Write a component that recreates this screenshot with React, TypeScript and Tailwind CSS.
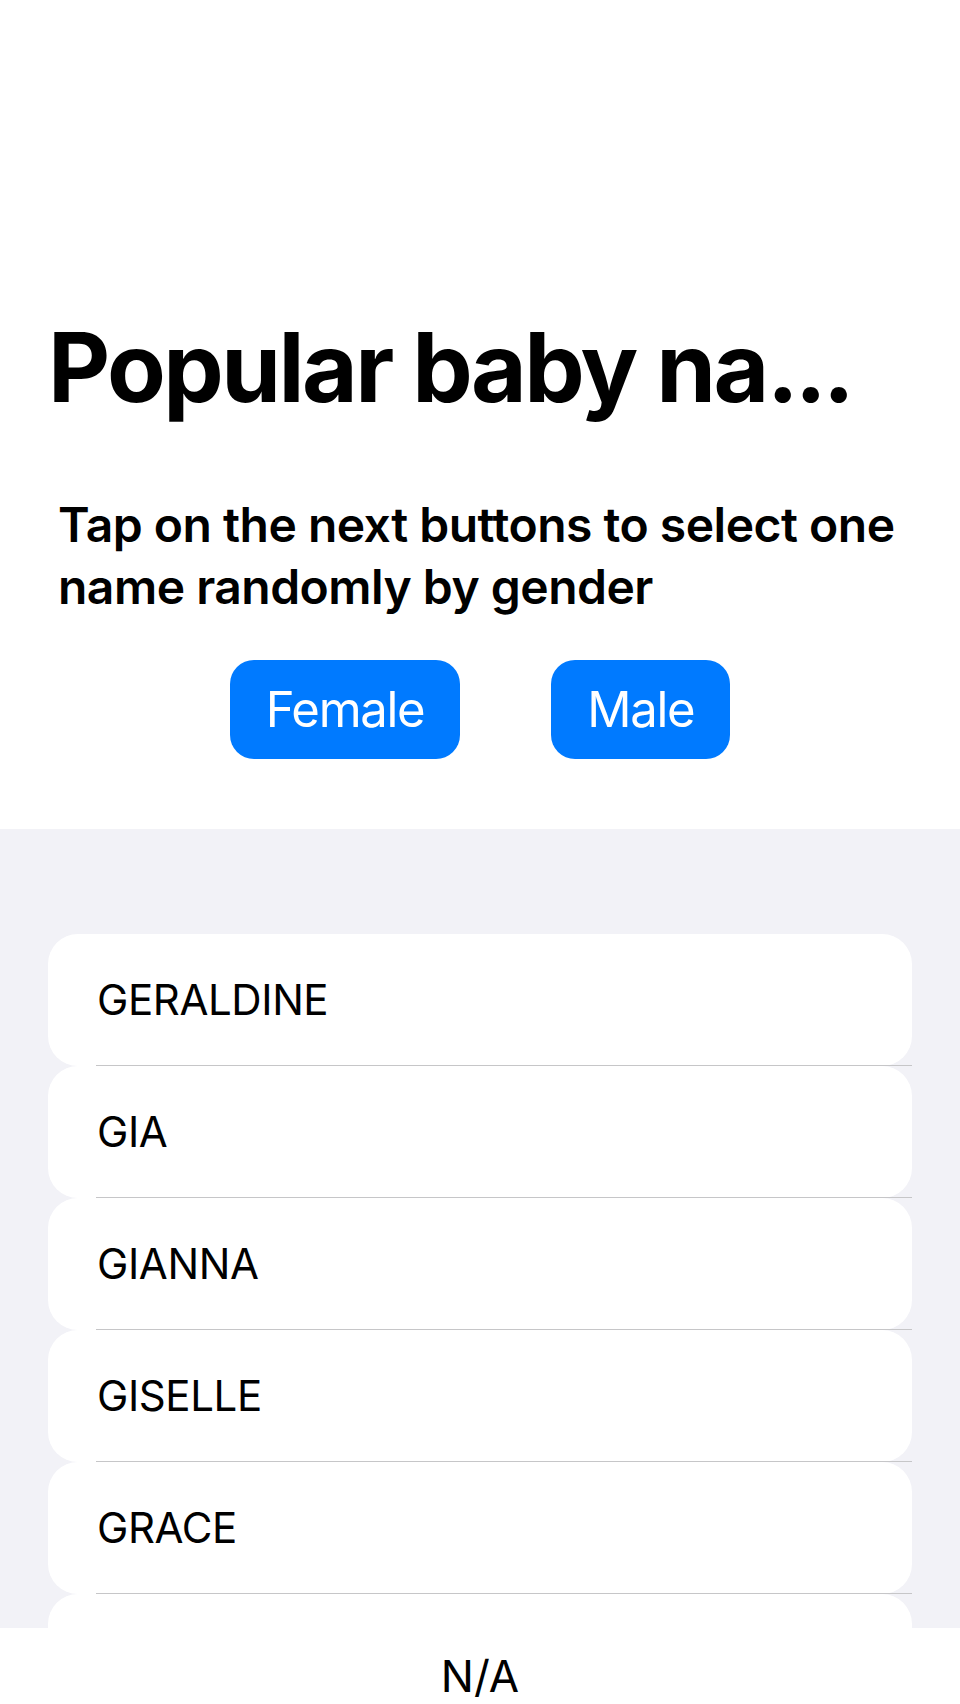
import React from 'react'

// last row is only partly visible under the bottom bar
const names = ['GERALDINE', 'GIA', 'GIANNA', 'GISELLE', 'GRACE', '']

export default function App() {
  return (
    <div className="h-[1704px] w-[960px] flex flex-col bg-white overflow-hidden" style={{ fontFamily: 'Inter, "Noto Sans", sans-serif' }}>
      <div className="h-[829px] shrink-0 bg-white pt-[310px]">
        <h1 className="pl-[48px] text-[96px] leading-[115px] font-bold text-black whitespace-nowrap tracking-[-2.5px]">
          Popular baby na<span className="tracking-[-4px]">...</span>
        </h1>
        <p className="mt-[69px] pl-[58px] pr-[40px] text-[48px] leading-[62px] font-semibold text-black tracking-[-0.5px]">
          Tap on the next buttons to select one name randomly by gender
        </p>
        <div className="mt-[42px] flex justify-center gap-[91px]">
          <button className="h-[99px] px-[36px] rounded-[24px] bg-[#007aff] text-white text-[49px] leading-[99px] tracking-[-1.3px]">Female</button>
          <button className="h-[99px] px-[36px] rounded-[24px] bg-[#007aff] text-white text-[49px] leading-[99px] tracking-[-1.3px]">Male</button>
        </div>
      </div>
      <div className="flex-1 bg-[#f2f2f7] pt-[105px] px-[48px] overflow-hidden">
        {names.map((n, i) => (
          <div key={i} className="relative h-[132px]">
            <div className="h-full bg-white rounded-[30px] pl-[49px] text-[42px] leading-[132px] text-black tracking-[-0.4px]">{n}</div>
            <div className="absolute bottom-0 left-[48px] right-0 h-px bg-[#c6c6c8]" />
          </div>
        ))}
      </div>
      <div className="h-[76px] shrink-0 bg-white pt-[26px] text-center text-[44px] leading-[44px] text-black">N/A</div>
    </div>
  )
}
